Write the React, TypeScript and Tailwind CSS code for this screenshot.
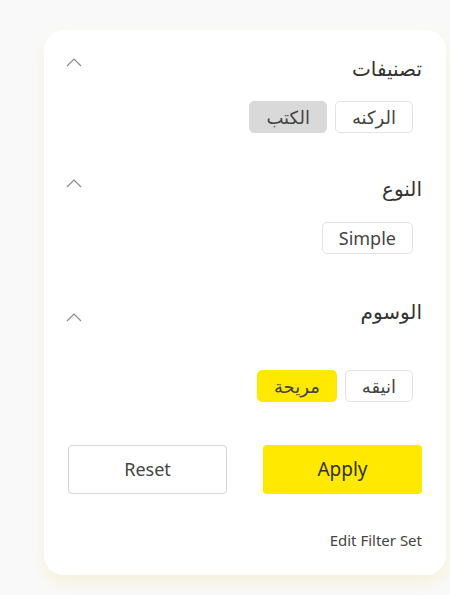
import type React from "react";

interface Chip {
  label: string;
  tone?: "plain" | "gray" | "yellow";
}

interface Section {
  title: string;
  chips: Chip[];
  chevronOffset: string;
  headerGap: string;
  chipsGap: string;
}

const sections: Section[] = [
  {
    title: "تصنيفات",
    chips: [{ label: "الركنه" }, { label: "الكتب", tone: "gray" }],
    chevronOffset: "mt-[3px]",
    headerGap: "mt-0",
    chipsGap: "mt-[18px]",
  },
  {
    title: "النوع",
    chips: [{ label: "Simple" }],
    chevronOffset: "mt-[4px]",
    headerGap: "mt-[42px]",
    chipsGap: "mt-[19px]",
  },
  {
    title: "الوسوم",
    chips: [{ label: "انيقه" }, { label: "مريحة", tone: "yellow" }],
    chevronOffset: "mt-[15px]",
    headerGap: "mt-[44px]",
    chipsGap: "mt-[44px]",
  },
];

function ChevronUp(): React.ReactElement {
  return (
    <svg width="16" height="9" viewBox="0 0 16 9" fill="none" className="shrink-0">
      <path d="M1 8 L8 1 L15 8" stroke="#8a8a8a" strokeWidth="1.2" />
    </svg>
  );
}

function chipClass(tone: Chip["tone"]): string {
  if (tone === "gray") {
    return "border border-[#d9d9d9] bg-[#d9d9d9]";
  }
  if (tone === "yellow") {
    return "border border-[#ffe900] bg-[#ffe900]";
  }
  return "border border-[#e3e3e3] bg-white";
}

export default function App(): React.ReactElement {
  return (
    <div
      className="min-h-[595px] w-[450px] bg-[#f9f9f9] pl-[44px] pr-[4px] pt-[30px]"
      style={{ fontFamily: '"Noto Sans", "DejaVu Sans", sans-serif' }}
    >
      <div className="rounded-[20px] bg-white px-[24px] pb-[25px] pt-[25px] shadow-[0_8px_14px_rgba(245,235,195,0.55)]">
        {sections.map((section) => (
          <div key={section.title} className={section.headerGap}>
            <div dir="rtl" className="flex items-start justify-between">
              <span className="text-[20px] leading-[28px] text-[#333]">{section.title}</span>
              <div className={`ml-[-2px] ${section.chevronOffset}`}>
                <ChevronUp />
              </div>
            </div>
            <div dir="rtl" className={`flex gap-[8px] pr-[9px] ${section.chipsGap}`}>
              {section.chips.map((chip) => (
                <span
                  key={chip.label}
                  className={`flex h-[32px] items-center rounded-[5px] px-[16px] text-[18px] text-[#444] ${chipClass(chip.tone)}`}
                >
                  {chip.label}
                </span>
              ))}
            </div>
          </div>
        ))}

        <div className="mt-[43px] flex justify-between">
          <button className="h-[49px] w-[159px] rounded-[4px] border border-[#d6d6d6] bg-white text-[18px] text-[#444]">
            Reset
          </button>
          <button className="h-[49px] w-[159px] rounded-[4px] bg-[#ffe900] text-[19px] text-[#333]">
            Apply
          </button>
        </div>

        <div className="mt-[36px] text-right text-[15px] leading-[20px] text-[#444]">Edit Filter Set</div>
      </div>
    </div>
  );
}
